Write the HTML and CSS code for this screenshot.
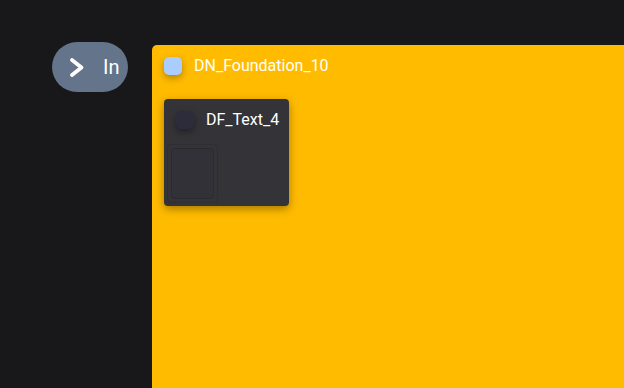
FILE: index.html
```html
<!DOCTYPE html>
<html lang="en">
<head>
  <meta charset="UTF-8" />
  <title>DN_Foundation_10</title>
  <link rel="stylesheet" href="styles.css">
</head>
<body>
  <div class="canvas">
    <div class="input-pill">
      <svg class="chevron" width="17" height="22" viewBox="0 0 17 22">
        <path d="M4 4 L13.5 11.5 L4 19" fill="none" stroke="#ffffff" stroke-width="3.8" stroke-linecap="round" stroke-linejoin="round"/>
      </svg>
      <span>In</span>
    </div>

    <div class="frame">
      <div class="frame-header">
        <div class="frame-dot"></div>
        <div class="frame-title">DN_Foundation_10</div>
      </div>

      <div class="card">
        <div class="card-header">
          <div class="card-dot"></div>
          <div class="card-title">DF_Text_4</div>
        </div>
        <div class="slot">
          <div class="slot-inner"></div>
        </div>
      </div>
    </div>
  </div>
</body>
</html>
```

FILE: styles.css
```css
html, body {
  margin: 0;
  height: 100%;
  overflow: hidden;
}

body {
  font-family: Roboto, 'Liberation Sans', sans-serif;
  background-color: #18181b;
  color: #ffffff;
}

.canvas {
  display: flex;
  align-items: flex-start;
  height: 100%;
  padding-left: 52px;
}

.input-pill {
  display: flex;
  align-items: center;
  width: 76px;
  height: 50px;
  margin-top: 42px;
  box-sizing: border-box;
  padding-left: 16px;
  border-radius: 25px;
  background-color: #64748b;
  font-size: 20px;
}

.chevron {
  margin-right: 18px;
}

.frame {
  flex: 1;
  align-self: stretch;
  margin-top: 45px;
  margin-left: 24px;
  padding: 12px;
  background-color: #ffbb00;
  border-top-left-radius: 5px;
}

.frame-header {
  display: flex;
  align-items: center;
  gap: 12px;
  height: 18px;
}

.frame-dot {
  width: 18px;
  height: 18px;
  border-radius: 5px;
  background-color: #abcdfd;
  box-shadow: 0 3px 7px rgba(0,0,0,0.3);
}

.frame-title {
  font-size: 16px;
  line-height: 18px;
}

.card {
  width: 125px;
  height: 107px;
  box-sizing: border-box;
  margin-top: 24px;
  padding: 12px 3px 3px 3px;
  background-color: #333338;
  border-radius: 4px;
  box-shadow: 0 3px 8px rgba(0,0,0,0.35);
}

.card-header {
  display: flex;
  align-items: center;
  gap: 12px;
  height: 18px;
  padding-left: 9px;
}

.card-dot {
  width: 18px;
  height: 18px;
  border-radius: 6px;
  background-color: #2c2c3b;
  box-shadow: 0 3px 7px rgba(0,0,0,0.35);
}

.card-title {
  font-size: 16px;
  line-height: 18px;
}

.slot {
  width: 51px;
  height: 59px;
  box-sizing: border-box;
  margin-top: 15px;
  padding: 3px;
  border: 1px solid #2e2e33;
  border-radius: 4px;
}

.slot-inner {
  height: 100%;
  box-sizing: border-box;
  border: 1px solid #2a2a2f;
  border-radius: 4px;
  background-color: #313137;
}
```
